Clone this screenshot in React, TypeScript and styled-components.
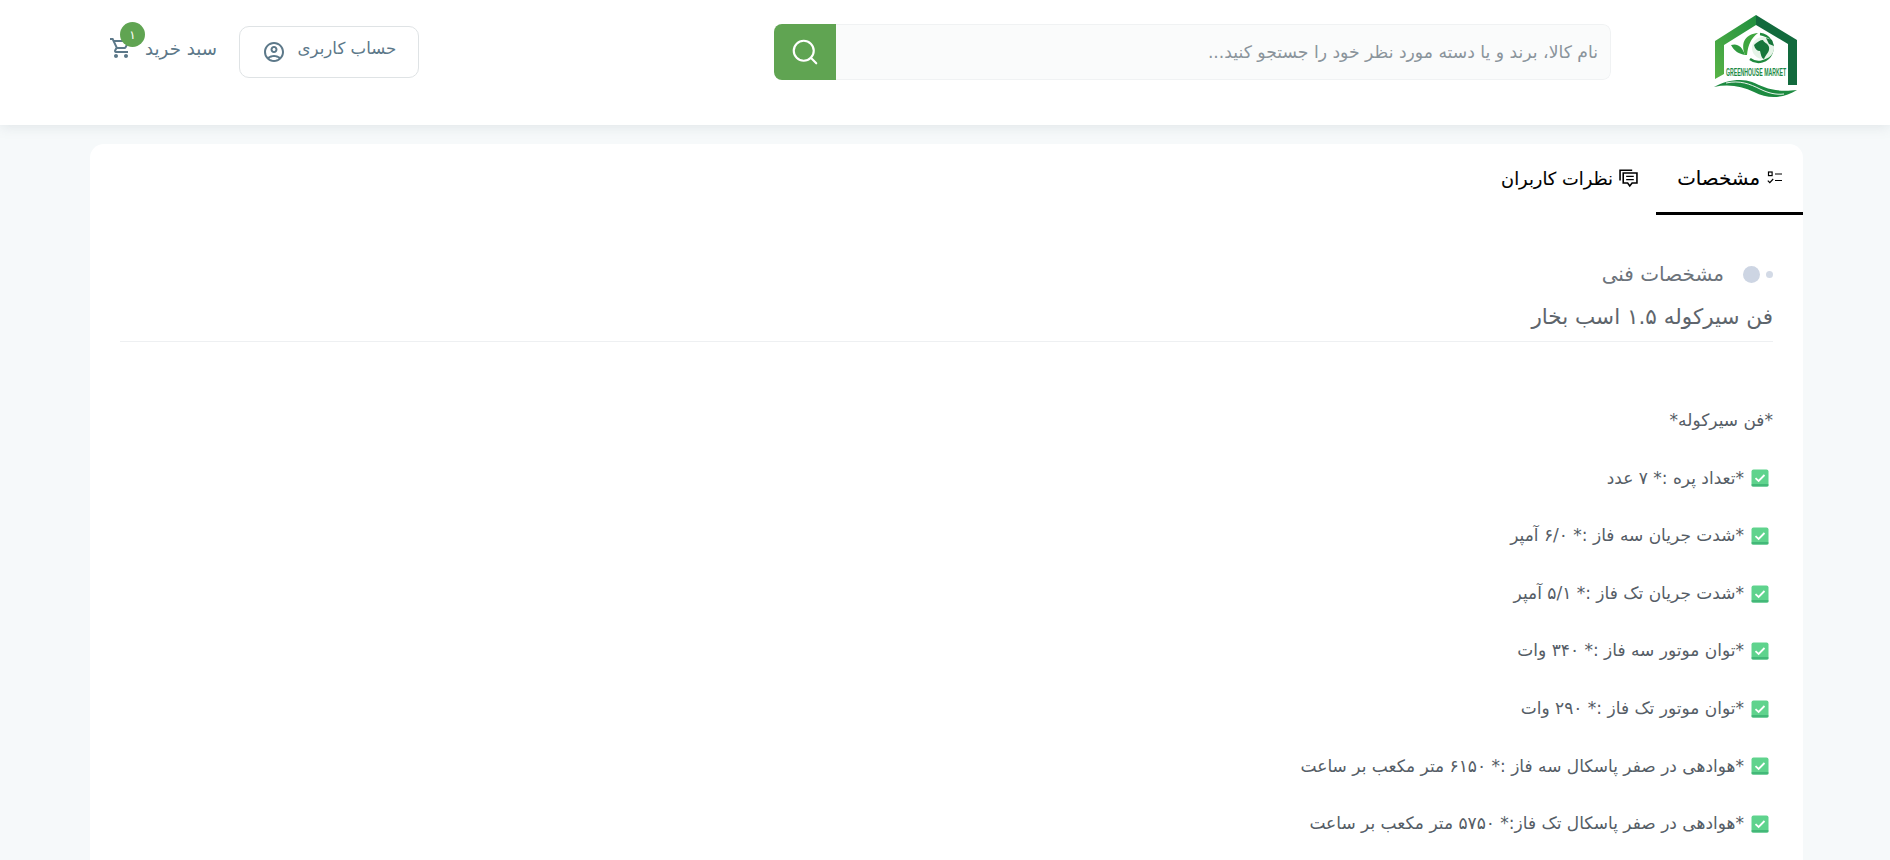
import React from "react";
import styled, { createGlobalStyle } from "styled-components";
import { Search } from "lucide-react";
import { MdOutlineShoppingCart, MdOutlineAccountCircle } from "react-icons/md";

const Global = createGlobalStyle`
  html, body { margin: 0; padding: 0; background: #f6f9fa; }
  body { font-family: "DejaVu Sans", "Noto Sans", sans-serif; direction: rtl; overflow-x: hidden; }
`;

const Header = styled.header`
  height: 125px;
  background: #fff;
  box-shadow: 0 2px 12px rgba(120, 130, 140, 0.16);
  display: grid;
  grid-template-columns: 189px 837px 1fr;
  align-items: start;
  padding: 0 90px;
`;

const LogoBox = styled.div`
  height: 125px;
  display: flex;
  justify-content: flex-start;
  padding: 14px 2px 0 0;
  box-sizing: border-box;
`;

const SearchBar = styled.div`
  margin-top: 24px;
  height: 56px;
  display: flex;
  border-radius: 8px;
  overflow: hidden;
`;

const SearchInput = styled.div`
  flex: 1;
  background: #fafbfb;
  border: 1px solid #f0f2f3;
  border-left: none;
  border-radius: 0 8px 8px 0;
  display: flex;
  align-items: center;
  padding-right: 12px;
  color: #8a949b;
  font-size: 17.2px;
`;

const SearchButton = styled.div`
  width: 62px;
  background: #60a452;
  display: flex;
  align-items: center;
  justify-content: center;
  color: #fff;
`;

const Actions = styled.div`
  display: flex;
  justify-content: flex-end;
  align-items: flex-start;
  padding-left: 19px;
  color: #5c7889;
  font-size: 16.6px;
`;

const AccountButton = styled.div`
  margin-top: 26px;
  margin-left: 22px;
  width: 180px;
  height: 52px;
  box-sizing: border-box;
  border: 1px solid #dfe3e5;
  border-radius: 10px;
  display: flex;
  align-items: center;
  justify-content: center;
  gap: 12px;
  padding-bottom: 1px;
`;

const RaisedLabel = styled.span`
  position: relative;
  top: -3px;
`;

const Cart = styled.div`
  margin-top: 26px;
  height: 44px;
  display: flex;
  align-items: center;
  position: relative;
  gap: 12px;
  font-size: 18.2px;
`;

const Badge = styled.span`
  position: absolute;
  left: 11px;
  top: -4px;
  width: 25px;
  height: 25px;
  border-radius: 50%;
  background: #60a452;
  color: #fff;
  font-size: 12px;
  display: flex;
  align-items: center;
  justify-content: center;
`;

const Card = styled.main`
  margin: 19px 87px 24px 90px;
  background: #fff;
  border-radius: 14px;
  padding-bottom: 40px;
`;

const Tabs = styled.div`
  display: flex;
  height: 71px;
`;

const Tab = styled.div<{ $active?: boolean }>`
  height: 71px;
  box-sizing: border-box;
  width: ${(p) => (p.$active ? "147px" : "auto")};
  padding-right: ${(p) => (p.$active ? "20px" : "18px")};
  padding-bottom: ${(p) => (p.$active ? "0" : "2px")};
  border-bottom: ${(p) => (p.$active ? "3px solid #000" : "none")};
  display: flex;
  align-items: center;
  gap: 6px;
  color: #000;
  font-size: ${(p) => (p.$active ? "19.8px" : "17.8px")};
  -webkit-text-stroke: 0.12px #000;
`;

const Body = styled.section`
  padding: 47px 30px 0;
  color: #555d66;
`;

const Crumb = styled.div`
  display: flex;
  align-items: center;
  height: 24px;
  font-size: 20px;
  color: #6c737b;
`;

const SmallDot = styled.span`
  width: 7px;
  height: 7px;
  border-radius: 50%;
  background: #d3dae6;
  margin-left: 6px;
`;

const BigDot = styled.span`
  width: 17px;
  height: 17px;
  border-radius: 50%;
  background: #cdd5e3;
  margin-left: 19px;
`;

const Title = styled.h2`
  margin: 15px 0 0;
  font-size: 21.5px;
  font-weight: 400;
  line-height: 32px;
  color: #5e656c;
  padding-bottom: 8px;
  border-bottom: 1px solid #eef0f2;
`;

const Content = styled.div`
  padding-top: 66px;
`;

const Para = styled.p`
  margin: 0 0 32px;
  font-size: 17px;
  line-height: 25.6px;
  color: #555d66;
  display: flex;
  align-items: center;
  gap: 7px;
`;

const CheckIcon = () => (
  <svg width="18" height="18" viewBox="0 0 18 18" style={{ margin: "0 4px 0 0" }}>
    <rect x="0.5" y="0.5" width="17" height="17" rx="2" fill="#5fd38d" />
    <rect x="0.5" y="15" width="17" height="2.5" rx="1" fill="#43b878" />
    <path d="M4.5 9.2 L7.6 12 L13.5 6" fill="none" stroke="#fff" strokeWidth="1.8" />
  </svg>
);

const SpecIcon = () => (
  <svg width="17" height="16" viewBox="0 0 17 16" fill="none" stroke="#000" strokeWidth="1.2">
    <rect x="2.5" y="2" width="3.6" height="3.6" />
    <path d="M9 4h7M9 10.5h7M1.8 10.6l2 2 3.4-3.6" />
  </svg>
);

const CommentIcon = () => (
  <svg width="19" height="19" viewBox="0 0 18 18" fill="none" stroke="#000" strokeWidth="1.5">
    <path d="M1 11V1.2h11.5" />
    <path d="M4 3.8h13v9.4h-4.6L10.2 16l-2-2.8H4z" />
    <path d="M6.8 7h7.2M6.8 10h7.2" strokeWidth="1.2" />
  </svg>
);

const Logo = () => (
  <svg width="84" height="86" viewBox="0 0 84 86">
    <defs>
      <linearGradient id="lg" x1="0" x2="1" y1="1" y2="0">
        <stop offset="0" stopColor="#58b346" />
        <stop offset="1" stopColor="#1f8f3f" />
      </linearGradient>
    </defs>
    <path d="M42 1 L1 27 V65 L10 60 V31 L42 11 Z" fill="url(#lg)" />
    <path d="M42 1 L83 26 V71 H74 V30 L42 11 Z" fill="#126a3d" />
    <path d="M46 20 A14 14 0 1 1 36 45" fill="none" stroke="#1f8a3e" strokeWidth="2.4" />
    <circle cx="49" cy="34" r="11" fill="#e6f4e8" />
    <path d="M40 31c3-3 6-5 9-5 1 3 5 3 6 7 1 5-3 7-5 12-3-1-3-5-4-8-3 0-5-2-6-6z" fill="#17763b" />
    <path d="M52 24l6 2 2 6-5-2z" fill="#17763b" />
    <path d="M31 41C26 28 32 20 44 19 37 24 34 31 33 41z" fill="#3fa63f" />
    <path d="M17 31c6-2 11 1 14 10-6-1-11-4-14-10z" fill="#2f9a3f" />
    <text transform="translate(12 62) scale(0.47 1)" direction="ltr" fontFamily="'Liberation Sans',sans-serif" fontWeight="700" fontSize="11" fill="#1c8a46">GREENHOUSE MARKET</text>
    <path d="M0 73 C12 66 28 64 38 68 C50 73 60 79 83 76 C70 84 55 86 40 78 C28 72 14 70 0 73Z" fill="#1c8a40" />
    <path d="M12 69 C26 66 36 70 46 75 C54 79 62 81 70 80" fill="none" stroke="#fff" strokeWidth="0.9" />
  </svg>
);

const rows = [
  "*تعداد پره :* ۷ عدد",
  "*شدت جریان سه فاز :* ۶/۰ آمپر",
  "*شدت جریان تک فاز :* ۵/۱ آمپر",
  "*توان موتور سه فاز :* ۳۴۰ وات",
  "*توان موتور تک فاز :* ۲۹۰ وات",
  "*هوادهی در صفر پاسکال سه فاز :* ۶۱۵۰ متر مکعب بر ساعت",
  "*هوادهی در صفر پاسکال تک فاز:* ۵۷۵۰ متر مکعب بر ساعت",
];

export default function App() {
  return (
    <>
      <Global />
      <Header>
        <LogoBox>
          <Logo />
        </LogoBox>
        <SearchBar>
          <SearchInput>نام کالا، برند و یا دسته مورد نظر خود را جستجو کنید...</SearchInput>
          <SearchButton>
            <Search size={30} strokeWidth={1.7} />
          </SearchButton>
        </SearchBar>
        <Actions>
          <AccountButton>
            <RaisedLabel>حساب کاربری</RaisedLabel>
            <MdOutlineAccountCircle size={24} />
          </AccountButton>
          <Cart>
            <span>سبد خرید</span>
            <MdOutlineShoppingCart size={24} />
            <Badge>۱</Badge>
          </Cart>
        </Actions>
      </Header>
      <Card>
        <Tabs>
          <Tab $active>
            <SpecIcon />
            <span>مشخصات</span>
          </Tab>
          <Tab>
            <CommentIcon />
            <span>نظرات کاربران</span>
          </Tab>
        </Tabs>
        <Body>
          <Crumb>
            <SmallDot />
            <BigDot />
            <span>مشخصات فنی</span>
          </Crumb>
          <Title>فن سیرکوله ۱.۵ اسب بخار</Title>
          <Content>
            <Para>*فن سیرکوله*</Para>
            {rows.map((r) => (
              <Para key={r}>
                <CheckIcon />
                <span>{r}</span>
              </Para>
            ))}
          </Content>
        </Body>
      </Card>
    </>
  );
}
